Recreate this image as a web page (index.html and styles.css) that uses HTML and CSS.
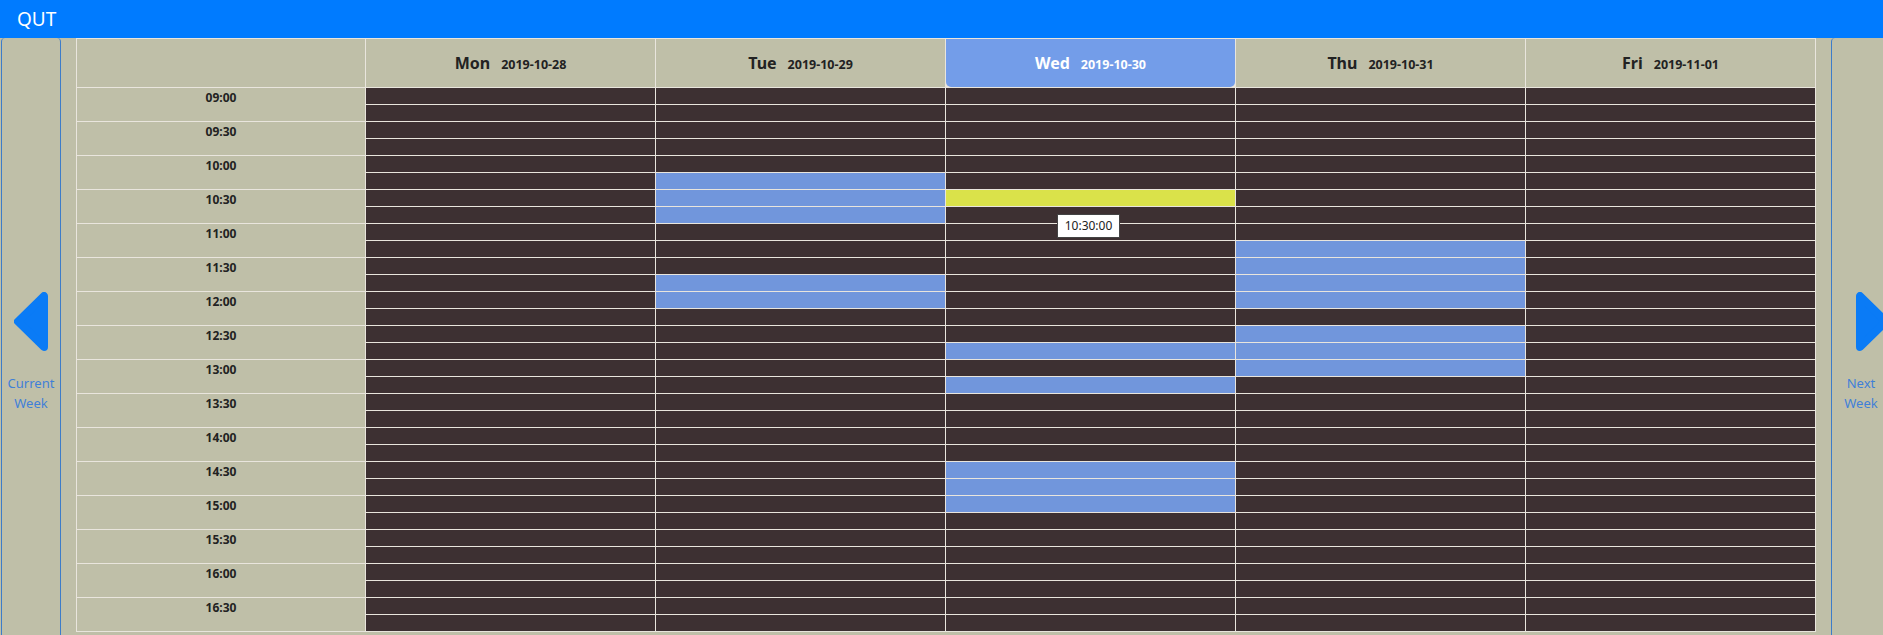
FILE: index.html
```html
<!DOCTYPE html>
<html lang="en">
<head>
<meta charset="utf-8">
<title>QUT</title>
<link rel="stylesheet" href="styles.css">
</head>
<body>
<header class="topbar">QUT</header>
<main class="main">
  <aside class="nav">
    <svg class="arrow" width="34" height="59" viewBox="0 0 34 59"><polygon points="30,4 30,55 4,29.5" fill="#0a7bf6" stroke="#0a7bf6" stroke-width="8" stroke-linejoin="round"/></svg>
    <div>Current<br>Week</div>
  </aside>
  <section class="schedule">
    <div class="hd"></div>
    <div class="hd"><div><span class="day">Mon</span><span class="date">2019-10-28</span></div></div>
    <div class="hd"><div><span class="day">Tue</span><span class="date">2019-10-29</span></div></div>
    <div class="hd today"><div><span class="day">Wed</span><span class="date">2019-10-30</span></div></div>
    <div class="hd"><div><span class="day">Thu</span><span class="date">2019-10-31</span></div></div>
    <div class="hd"><div><span class="day">Fri</span><span class="date">2019-11-01</span></div></div>

    <div class="t">09:00</div>
    <div class="c"></div><div class="c"></div><div class="c"></div><div class="c"></div><div class="c"></div>
    <div class="c"></div><div class="c"></div><div class="c"></div><div class="c"></div><div class="c"></div>

    <div class="t">09:30</div>
    <div class="c"></div><div class="c"></div><div class="c"></div><div class="c"></div><div class="c"></div>
    <div class="c"></div><div class="c"></div><div class="c"></div><div class="c"></div><div class="c"></div>

    <div class="t">10:00</div>
    <div class="c"></div><div class="c"></div><div class="c"></div><div class="c"></div><div class="c"></div>
    <div class="c"></div><div class="c b"></div><div class="c"></div><div class="c"></div><div class="c"></div>

    <div class="t">10:30</div>
    <div class="c"></div><div class="c b"></div><div class="c y"></div><div class="c"></div><div class="c"></div>
    <div class="c"></div><div class="c b"></div><div class="c"></div><div class="c"></div><div class="c"></div>

    <div class="t">11:00</div>
    <div class="c"></div><div class="c"></div><div class="c"></div><div class="c"></div><div class="c"></div>
    <div class="c"></div><div class="c"></div><div class="c"></div><div class="c b"></div><div class="c"></div>

    <div class="t">11:30</div>
    <div class="c"></div><div class="c"></div><div class="c"></div><div class="c b"></div><div class="c"></div>
    <div class="c"></div><div class="c b"></div><div class="c"></div><div class="c b"></div><div class="c"></div>

    <div class="t">12:00</div>
    <div class="c"></div><div class="c b"></div><div class="c"></div><div class="c b"></div><div class="c"></div>
    <div class="c"></div><div class="c"></div><div class="c"></div><div class="c"></div><div class="c"></div>

    <div class="t">12:30</div>
    <div class="c"></div><div class="c"></div><div class="c"></div><div class="c b"></div><div class="c"></div>
    <div class="c"></div><div class="c"></div><div class="c b"></div><div class="c b"></div><div class="c"></div>

    <div class="t">13:00</div>
    <div class="c"></div><div class="c"></div><div class="c"></div><div class="c b"></div><div class="c"></div>
    <div class="c"></div><div class="c"></div><div class="c b"></div><div class="c"></div><div class="c"></div>

    <div class="t">13:30</div>
    <div class="c"></div><div class="c"></div><div class="c"></div><div class="c"></div><div class="c"></div>
    <div class="c"></div><div class="c"></div><div class="c"></div><div class="c"></div><div class="c"></div>

    <div class="t">14:00</div>
    <div class="c"></div><div class="c"></div><div class="c"></div><div class="c"></div><div class="c"></div>
    <div class="c"></div><div class="c"></div><div class="c"></div><div class="c"></div><div class="c"></div>

    <div class="t">14:30</div>
    <div class="c"></div><div class="c"></div><div class="c b"></div><div class="c"></div><div class="c"></div>
    <div class="c"></div><div class="c"></div><div class="c b"></div><div class="c"></div><div class="c"></div>

    <div class="t">15:00</div>
    <div class="c"></div><div class="c"></div><div class="c b"></div><div class="c"></div><div class="c"></div>
    <div class="c"></div><div class="c"></div><div class="c"></div><div class="c"></div><div class="c"></div>

    <div class="t">15:30</div>
    <div class="c"></div><div class="c"></div><div class="c"></div><div class="c"></div><div class="c"></div>
    <div class="c"></div><div class="c"></div><div class="c"></div><div class="c"></div><div class="c"></div>

    <div class="t">16:00</div>
    <div class="c"></div><div class="c"></div><div class="c"></div><div class="c"></div><div class="c"></div>
    <div class="c"></div><div class="c"></div><div class="c"></div><div class="c"></div><div class="c"></div>

    <div class="t">16:30</div>
    <div class="c"></div><div class="c"></div><div class="c"></div><div class="c"></div><div class="c"></div>
    <div class="c"></div><div class="c"></div><div class="c"></div><div class="c"></div><div class="c"></div>

    <div class="tip">10:30:00</div>
  </section>
  <aside class="nav">
    <svg class="arrow arrow-next" width="34" height="59" viewBox="0 0 34 59"><polygon points="4,4 4,55 30,29.5" fill="#0a7bf6" stroke="#0a7bf6" stroke-width="8" stroke-linejoin="round"/></svg>
    <div>Next<br>Week</div>
  </aside>
</main>
</body>
</html>
```
FILE: styles.css
```css
html, body {
  margin: 0;
  padding: 0;
  overflow: hidden;
}
body {
  font-family: "Noto Sans", "Open Sans", sans-serif;
  background: #bfbfa8;
  color: #222;
}
.topbar {
  height: 38px;
  background: #007bff;
  color: #fff;
  font-size: 19px;
  line-height: 38px;
  padding-left: 17px;
}
.main {
  display: flex;
  gap: 15px;
  padding-left: 1px;
  height: 597px;
  overflow: hidden;
}
.nav {
  flex: none;
  width: 60px;
  box-sizing: border-box;
  border-left: 1px solid #3d7cc9;
  border-right: 1px solid #3d7cc9;
  border-radius: 4px 4px 0 0;
  display: flex;
  flex-direction: column;
  align-items: center;
  padding-top: 254px;
  color: #3f80d8;
  font-size: 13px;
  line-height: 20px;
  text-align: center;
}
.arrow {
  display: block;
  margin-bottom: 22px;
}
.arrow-next {
  margin-left: 24px;
}
.schedule {
  flex: none;
  position: relative;
  align-self: flex-start;
  display: grid;
  grid-template-columns: 288px repeat(5, 289px);
  grid-template-rows: 48px;
  grid-auto-rows: 16px;
  gap: 1px;
  padding: 1px;
  background: #e9e5dd;
}
.hd {
  background: #bfbfa8;
  display: flex;
  align-items: center;
  justify-content: center;
  font-weight: 700;
  color: #222;
}
.hd .day {
  font-size: 16px;
  margin-right: 11px;
}
.hd .date {
  font-size: 12.5px;
}
.hd.today {
  background: #739de9;
  color: #fff;
  border-radius: 0 0 5px 5px;
}
.t {
  grid-row: span 2;
  background: #bfbfa8;
  text-align: center;
  font-weight: 700;
  font-size: 12px;
  line-height: 16px;
  padding-top: 2px;
  color: #222;
}
.c {
  background: #3d3032;
}
.c.b {
  background: #7196dc;
}
.c.y {
  background: #dae24a;
}
.tip {
  position: absolute;
  left: 981px;
  top: 176px;
  width: 63px;
  height: 24px;
  box-sizing: border-box;
  border: 1px solid #444;
  background: #fff;
  font-size: 12px;
  line-height: 22px;
  text-align: center;
  color: #222;
}
```
